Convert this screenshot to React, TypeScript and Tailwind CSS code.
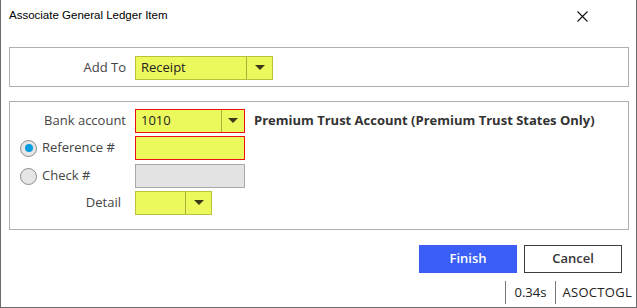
import React from "react";

const font = { fontFamily: '"Open Sans", "Noto Sans", Arial, sans-serif' };
const titleFont = { fontFamily: '"Liberation Sans", Arial, sans-serif' };

function Arrow() {
  return (
    <svg width="10" height="6" viewBox="0 0 10 6">
      <path d="M0 0 L10 0 L5 5 Z" fill="#3a3a1a" />
    </svg>
  );
}

function Dropdown({ w, value, red, sepRight }: { w: number; value?: string; red?: boolean; sepRight: number }) {
  return (
    <div
      className={`flex h-[24px] items-stretch bg-[#ebf95c] ${red ? "border border-[#e81010]" : "border border-[#b9c23a]"}`}
      style={{ width: w }}
    >
      <div className="flex flex-1 items-center pl-[5px] text-[13px] text-[#222]">{value}</div>
      <div className="flex items-center justify-center border-l border-[#a9b03c]" style={{ width: sepRight }}>
        <Arrow />
      </div>
    </div>
  );
}

function Radio({ checked }: { checked?: boolean }) {
  return (
    <div className="flex h-[17px] w-[17px] items-center justify-center rounded-full border-[1.5px] border-[#8c8c8c] bg-[#e6e6e6]">
      {checked && <div className="h-[8px] w-[8px] rounded-full bg-[#0a9be0]" />}
    </div>
  );
}

export default function App() {
  return (
    <div
      className="relative flex h-[308px] w-[637px] flex-col border-x border-b border-[#6d6d6d] bg-white text-[#333]"
      style={font}
    >
      <div className="flex h-[32px] items-center justify-between pl-[8px] pr-[48px]">
        <span className="text-[11.5px] text-black" style={titleFont}>
          Associate General Ledger Item
        </span>
        <svg width="11" height="11" viewBox="0 0 11 11">
          <path d="M0.5 0.5 L10.5 10.5 M10.5 0.5 L0.5 10.5" stroke="#111" strokeWidth="1.1" />
        </svg>
      </div>

      <div className="ml-[8px] mt-[15px] flex h-[40px] w-[620px] items-center border border-[#b0b0b0] pt-[1px]">
        <div className="w-[116px] text-right text-[13px] text-[#444]">Add To</div>
        <div className="ml-[9px]">
          <Dropdown w={138} value="Receipt" sepRight={26} />
        </div>
      </div>

      <div className="ml-[8px] mt-[14px] flex h-[129px] w-[620px] flex-col border border-[#b0b0b0] pt-[7px]">
        <div className="flex h-[24px] items-center">
          <div className="w-[116px] text-right text-[13px] text-[#444]">Bank account</div>
          <div className="ml-[9px]">
            <Dropdown w={110} value="1010" red sepRight={23} />
          </div>
          <div className="ml-[9px] text-[13px] font-bold text-[#333]">
            Premium Trust Account (Premium Trust States Only)
          </div>
        </div>
        <div className="mt-[3px] flex h-[24px] items-center">
          <div className="flex w-[116px] items-center pl-[10px]">
            <Radio checked />
            <span className="ml-[5px] text-[13px] text-[#444]">Reference #</span>
          </div>
          <div className="ml-[9px] h-[24px] w-[110px] border border-[#e81010] bg-[#ebf95c]" />
        </div>
        <div className="mt-[4px] flex h-[24px] items-center">
          <div className="flex w-[116px] items-center pl-[10px]">
            <Radio />
            <span className="ml-[5px] text-[13px] text-[#444]">Check #</span>
          </div>
          <div className="ml-[9px] h-[24px] w-[110px] border border-[#a8a8a8] bg-[#e3e3e3]" />
        </div>
        <div className="mt-[3px] flex h-[24px] items-center">
          <div className="w-[111px] text-right text-[13px] text-[#444]">Detail</div>
          <div className="ml-[14px]">
            <Dropdown w={77} sepRight={26} />
          </div>
        </div>
      </div>

      <div className="mt-[15px] flex justify-end gap-[7px] pr-[14px]">
        <button className="flex h-[28px] w-[98px] items-center justify-center bg-[#3b5ff6] text-[13px] font-semibold text-white">
          Finish
        </button>
        <button className="flex h-[28px] w-[98px] items-center justify-center border border-[#3c3c3c] bg-white text-[13px] font-semibold text-[#333]">
          Cancel
        </button>
      </div>

      <div className="mt-[8px] flex h-[23px] items-stretch justify-end pr-[4px] text-[13px] text-[#222]">
        <div className="w-px bg-[#777]" />
        <div className="flex items-center px-[9px]">0.34s</div>
        <div className="w-px bg-[#777]" />
        <div className="flex items-center pl-[6px] tracking-[0.3px]">ASOCTOGL</div>
      </div>
    </div>
  );
}
